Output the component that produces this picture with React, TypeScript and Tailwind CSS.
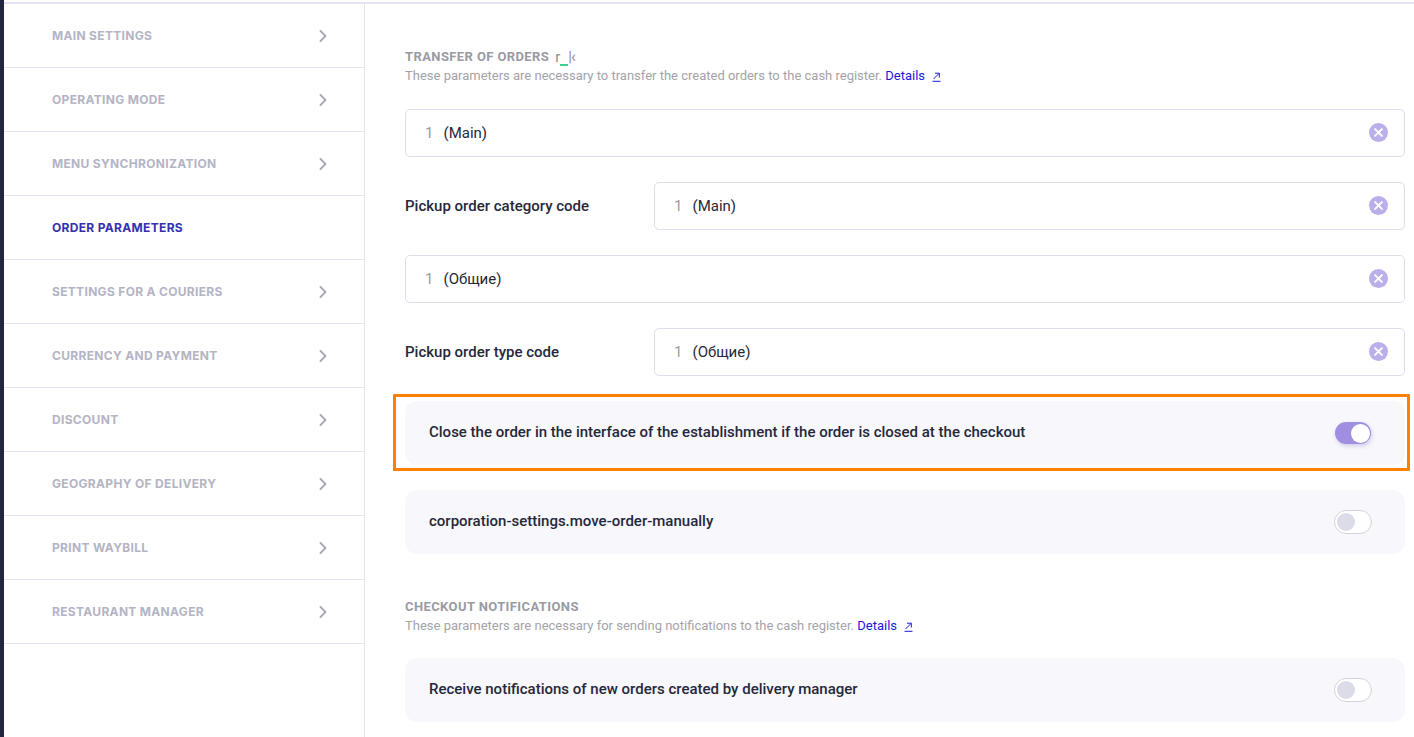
import React from 'react';
import { ChevronRight } from 'lucide-react';

const menuItems = [
  'Main settings',
  'Operating mode',
  'Menu synchronization',
  'Order parameters',
  'Settings for a couriers',
  'Currency and payment',
  'Discount',
  'Geography of delivery',
  'Print waybill',
  'Restaurant manager',
];

const ACTIVE_ITEM = 'Order parameters';

const ClearIcon = () => (
  <svg width="20" height="20" viewBox="0 0 20 20" className="shrink-0">
    <circle cx="10.5" cy="9.5" r="9.5" fill="#bcaeea" />
    <path d="M7.1 6.1l6.8 6.8M13.9 6.1l-6.8 6.8" stroke="#fff" strokeWidth="2" strokeLinecap="round" />
  </svg>
);

const ExternalIcon = () => (
  <svg width="9" height="10" viewBox="0 0 9 10" className="ml-[7px] inline-block">
    <path d="M1.5 7L7 1.5M3 1.2h4.3v4.3M0.5 9.3h8" fill="none" stroke="#1a1ad6" strokeWidth="1" />
  </svg>
);

const Select = ({ value, label }: { value: string; label?: string }) => {
  const field = (
    <div className="flex h-12 items-center rounded-[5px] border border-[#dfdcf0] bg-white pl-[19px] pr-[16px]">
      <span className="w-[18.5px] text-[#9a9aa6]">1</span>
      <span className="flex-1 text-[#26283a]">{value}</span>
      <ClearIcon />
    </div>
  );
  if (!label) return field;
  return (
    <div className="flex items-center">
      <div className="w-[249px] font-medium text-[#26283a]">{label}</div>
      <div className="min-w-0 flex-1">{field}</div>
    </div>
  );
};

const Toggle = ({ on }: { on?: boolean }) =>
  on ? (
    <div className="mr-[1px] flex h-[22px] w-9 items-center justify-end rounded-full bg-[#a08fe0] pr-[1px] shadow-[1px_2px_4px_rgba(90,80,170,0.25)]">
      <div className="h-[19px] w-[19px] rounded-full bg-white" />
    </div>
  ) : (
    <div className="flex h-6 w-[38px] items-center rounded-full border border-[#d2d2da] bg-white pl-[2px]">
      <div className="h-[18px] w-[18px] rounded-full bg-[#dcdce9]" />
    </div>
  );

const ToggleCard = ({ text, on }: { text: string; on?: boolean }) => (
  <div className="flex h-16 items-center justify-between rounded-xl bg-[#f7f7fc] pl-6 pr-[33px] font-medium text-[#26283a]">
    <span className="-mt-[1px]">{text}</span>
    <Toggle on={on} />
  </div>
);

const SectionHead = ({ title, text, extra }: { title: string; text: string; extra?: React.ReactNode }) => (
  <div>
    <div className="flex h-[19px] items-center text-[13px] font-bold uppercase tracking-[0.4px] text-[#9a9aa3]">
      {title}
      {extra}
    </div>
    <p className="h-[19px] text-[13px] leading-[19px] text-[#a3a3ab]">
      {text} <a className="text-[#1a1ad6]">Details</a>
      <ExternalIcon />
    </p>
  </div>
);

export default function App() {
  return (
    <div className="flex h-[737px] w-[1414px] overflow-hidden bg-white font-['Roboto',sans-serif] text-[15px]">
      <div className="w-1 shrink-0 bg-[#232640]" />
      <div className="flex min-w-0 flex-1 flex-col">
        <div className="mt-[2px] h-[2px] shrink-0 bg-[#e4e3f3]" />
        <div className="flex min-h-0 flex-1">
          <nav className="w-[361px] shrink-0 border-r border-[#e4e3f3] font-['Inter',sans-serif]">
            {menuItems.map((item) => (
              <div
                key={item}
                className="flex h-16 items-center justify-between border-b border-[#e4e3f3] pl-12 pr-[31px]"
              >
                <span
                  className={
                    item === ACTIVE_ITEM
                      ? 'text-[12px] font-bold uppercase tracking-[0.32px] text-[#3430b0]'
                      : 'text-[12px] font-bold uppercase tracking-[0.32px] text-[#b4b4c4]'
                  }
                >
                  {item}
                </span>
                {item !== ACTIVE_ITEM && <ChevronRight size={20} strokeWidth={2.2} className="text-[#a9a9b6]" />}
              </div>
            ))}
          </nav>
          <main className="relative min-w-0 flex-1 pl-10 pr-[9px] pt-[43px]">
            <SectionHead
              title="Transfer of orders"
              text="These parameters are necessary to transfer the created orders to the cash register."
              extra={
                <span className="ml-[6px] flex items-end text-[15px] font-normal normal-case leading-[16px] tracking-normal text-[#8d8d95]">
                  <span>r</span>
                  <span className="mb-[-1px] h-[2px] w-2 bg-[#3ecf8e]" />
                  <span>|</span>
                  <span className="-ml-[1px] text-[16px]">‹</span>
                </span>
              }
            />
            <div className="mt-[24px] flex flex-col gap-[25px]">
              <Select value="(Main)" />
              <Select label="Pickup order category code" value="(Main)" />
              <Select value="(Общие)" />
              <Select label="Pickup order type code" value="(Общие)" />
              <ToggleCard on text="Close the order in the interface of the establishment if the order is closed at the checkout" />
              <ToggleCard text="corporation-settings.move-order-manually" />
            </div>
            <div className="mt-[43px]">
              <SectionHead
                title="Checkout notifications"
                text="These parameters are necessary for sending notifications to the cash register."
              />
            </div>
            <div className="mt-[23px]">
              <ToggleCard text="Receive notifications of new orders created by delivery manager" />
            </div>
            {/* annotation frame drawn over the first toggle card */}
            <div className="pointer-events-none absolute left-[28px] top-[390px] h-[77px] w-[1017px] rounded-[1px] border-[3px] border-[#ff8000]" />
          </main>
        </div>
      </div>
    </div>
  );
}
